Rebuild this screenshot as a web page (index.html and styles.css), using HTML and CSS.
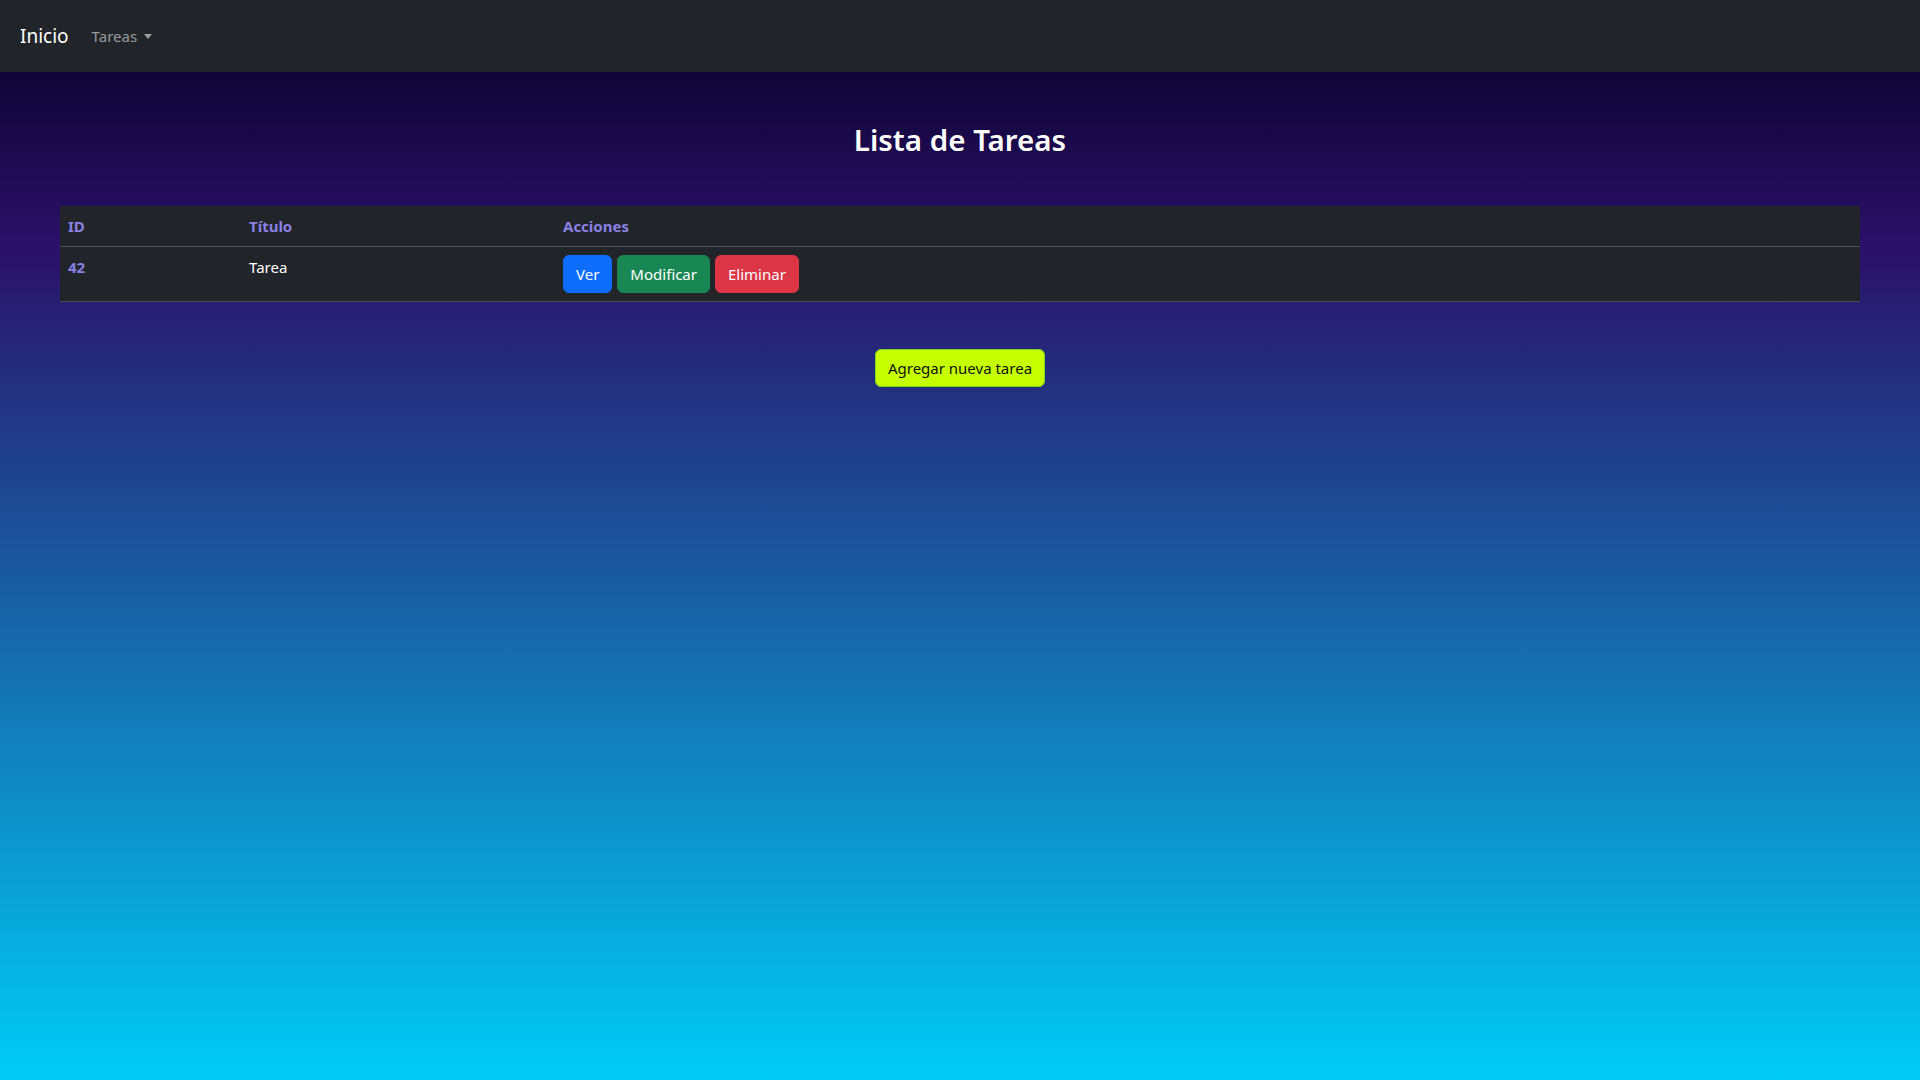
FILE: index.html
```html
<!DOCTYPE html>
<html lang="es">
<head>
<meta charset="utf-8">
<title>Lista de Tareas</title>
<link rel="stylesheet" href="styles.css">
</head>
<body>
<nav class="navbar">
  <a class="brand" href="#">Inicio</a>
  <ul class="nav">
    <li><a class="nav-link dropdown-toggle" href="#">Tareas</a></li>
  </ul>
</nav>
<main class="container">
  <h1 class="title">Lista de Tareas</h1>
  <table class="table">
    <thead>
      <tr>
        <th class="col-id">ID</th>
        <th class="col-title">Título</th>
        <th>Acciones</th>
      </tr>
    </thead>
    <tbody>
      <tr>
        <th class="row-id">42</th>
        <td>Tarea</td>
        <td>
          <div class="actions">
            <a class="btn btn-primary" href="#">Ver</a>
            <a class="btn btn-success" href="#">Modificar</a>
            <a class="btn btn-danger" href="#">Eliminar</a>
          </div>
        </td>
      </tr>
    </tbody>
  </table>
  <div class="add-row">
    <a class="btn btn-lime" href="#">Agregar nueva tarea</a>
  </div>
</main>
</body>
</html>
```
FILE: styles.css
```css
* { box-sizing: border-box; }
html, body { margin: 0; padding: 0; }
body {
  min-height: 100vh;
  font-family: "Noto Sans", "Open Sans", "Liberation Sans", sans-serif;
  font-size: 16px;
  line-height: 1.5;
  color: #212529;
  background: linear-gradient(180deg, #0d0433 0px, #0f0537 72px, #2b1068 245px, #00ccf6 1080px);
  background-attachment: fixed;
}
a { text-decoration: none; }

.navbar {
  display: flex;
  align-items: center;
  height: 72px;
  padding: 0 20px;
  background: #212529;
}
.brand {
  color: #fff;
  font-size: 19px;
  line-height: 30px;
  margin-right: 15px;
}
.nav { list-style: none; margin: 0; padding: 0; display: flex; }
.nav-link {
  display: block;
  padding: 8px;
  color: rgba(255,255,255,0.55);
  font-size: 15px;
}
.dropdown-toggle::after {
  content: "";
  display: inline-block;
  margin-left: 7px;
  vertical-align: 3px;
  border-top: 5px solid;
  border-right: 4.5px solid transparent;
  border-left: 4.5px solid transparent;
}

.container {
  padding: 44px 60px 0;
}
.title {
  margin: 0 0 42px;
  text-align: center;
  color: #fff;
  font-size: 29.5px;
  font-weight: 600;
  line-height: 48px;
}

.table {
  width: 100%;
  border-collapse: collapse;
  background: #212529;
  color: #fff;
  font-size: 15px;
}
.table th, .table td {
  padding: 8px;
  line-height: 24px;
  text-align: left;
  vertical-align: top;
  border-bottom: 1px solid #4d5154;
}
.table thead th { color: #8b80e6; font-weight: 700; }
.col-id { width: 181px; }
.col-title { width: 314px; }
.row-id { color: #8b80e6; font-weight: 700; }
.table td { font-weight: 400; }
.actions { display: flex; gap: 5px; }

.btn {
  display: inline-block;
  padding: 6px 12px;
  font-size: 15px;
  line-height: 24px;
  border: 1px solid transparent;
  border-radius: 6px;
  color: #fff;
}
.btn-primary { background: #0d6efd; border-color: #0d6efd; }
.btn-success { background: #198754; border-color: #198754; }
.btn-danger { background: #dc3545; border-color: #dc3545; }

.add-row {
  display: flex;
  justify-content: center;
  margin-top: 47px;
}
.btn-lime {
  background: #c6ff00;
  border-color: #7fd321;
  color: #111;
  padding: 6px 12px;
}
```
